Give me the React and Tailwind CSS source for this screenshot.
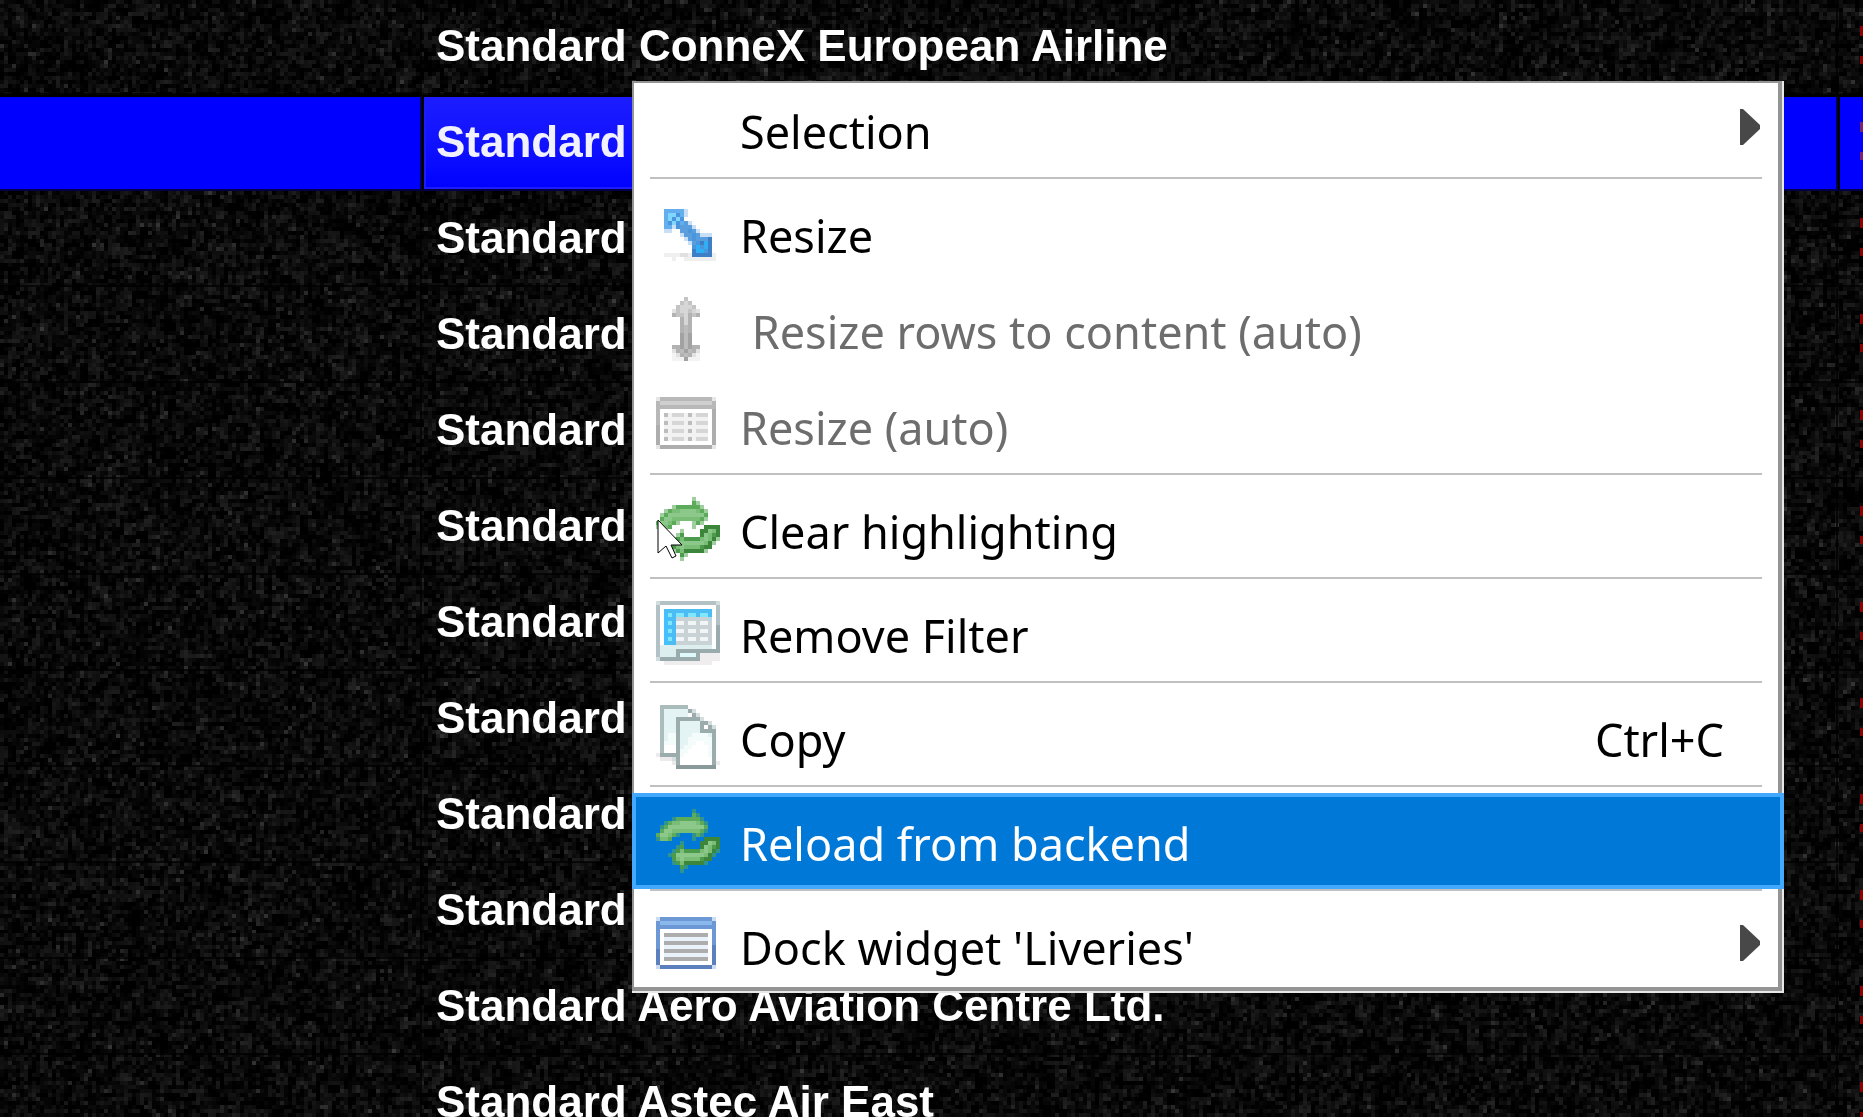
import { useEffect, useRef } from "react";

const airlines = [
  "Standard ConneX European Airline",
  "Standard",
  "Standard",
  "Standard",
  "Standard",
  "Standard",
  "Standard",
  "Standard",
  "Standard",
  "Standard",
  "Standard Aero Aviation Centre Ltd.",
  "Standard Astec Air East",
];
const SELECTED = 1;

/* Icons are 16 x 16 pixel maps; every character is a key of the palette. */
const resize = {
  palette: { A: "#62aeee", B: "#7fd6ff", C: "#4a96dc", D: "#5a9edd", E: "#3d7ec6", F: "#2fb0f4", l: "#c9dff5", s: "#efeff0", t: "#dfe0e2" },
  rows: [
    "", "",
    "..AAAAAl",
    "..ABBCAl",
    "..ABCBC.",
    "..ACBCADl",
    "..AAlCDDDl",
    "..ll..DDCDl",
    "......lDDCDlll",
    ".......lDCDDDE",
    "........lDCEFE",
    ".........CFCFE",
    ".........EFFCE",
    "..ssssttsEEEEEs",
    "....s..ssssssss",
    "",
  ],
};
const rowsAuto = {
  palette: { A: "#c4c4c4", B: "#d6d6d6", C: "#b2b2b2", D: "#a2a2a2", E: "#bcbcbc", l: "#e2e2e2", s: "#f3f3f3" },
  rows: [
    ".......A",
    "......ABA",
    ".....ABBBA",
    "....lABBABl",
    "....CAABCAC",
    "......CBC",
    "......CBC",
    "......CEC",
    "......CEC",
    "......DED",
    "......DED",
    "......DED",
    "....CCDEDCC",
    "....lCEDECl",
    "....slCECls",
    "....sssDsss",
  ],
};
const tableGray = {
  palette: { A: "#b8b8b8", B: "#cfcfcf", C: "#adadad", w: "#ffffff", d: "#bdbdbd", e: "#d6d6d6", f: "#f2f2f2", l: "#e6e6e6" },
  rows: [
    "",
    "lAAAAAAAAAAAAAl",
    "ABBBBBBBBBBBBBA",
    "AAAAAAAAAAAAAAA",
    "AwwwwwwwwwwwwwC",
    "AwdfeeefdfeeewC",
    "AwfffffffffffwC",
    "AwdfeeefdfeeewC",
    "CwfffffffffffwC",
    "CwdfeeefdfeeewC",
    "CwfffffffffffwC",
    "CwdfeeefdfeeewC",
    "CwwwwwwwwwwwwwC",
    "lCCCCCCCCCCCCCl",
    "", "",
  ],
};
const refresh = {
  palette: { A: "#5cab5b", B: "#8cc88a", C: "#79bd77", D: "#3b863b", E: "#4c9a4b", l: "#55a85590" },
  rows: [
    ".........l",
    ".........Al",
    "....lAAAAAAl",
    "..lACCBBBBCAl",
    ".lABBBBBBBBBA",
    ".ABBCCCCCCCAl",
    "ABBCAl...lAl",
    "lCCA.....l..DDDD",
    "......l....DDBCD",
    ".....lE....DBCED",
    "....lECEEEECBCDl",
    "...lEBBBBBBBCDl",
    "....ECBCCCCEDD",
    "....lECDDDDDl",
    "......El",
    "......l",
  ],
};
const filter = {
  palette: { A: "#b1c1c5", B: "#9aabae", w: "#ffffff", c: "#4cbcf4", b: "#42c0ff", d: "#7fe6fb", g: "#c9d3d5", h: "#f2f5f5", e: "#dceeed", f: "#b7d6df", i: "#dffafa", l: "#d2dde0", s: "#f0edef" },
  rows: [
    "lAAAAAAAAAAAAAAl",
    "AwwwwwwwwwwwwwwA",
    "AwccccccccccccwA",
    "AwbdcddcddcddcwA",
    "AwbccggggggggfwA",
    "AwbdchhghhghhgwA",
    "AwbccgggggggggwB",
    "AwbdchhghhghhgwB",
    "AwbccgggggggggwB",
    "AwbdchhghhghhgwB",
    "AwbccgggggggggwB",
    "AeeeeeeeeeeeeewB",
    "AeeeeBBBBBBBBBBB",
    "AeeeeBiiiiBsssss",
    "lBBBBBBBBBBsssss",
    "..ssssssssssss",
  ],
};
const copy = {
  palette: { A: "#abbcbc", B: "#9aacac", C: "#8a9999", w: "#ffffff", c: "#e4f4f4", d: "#f3fbfb", l: "#d5dede", s: "#eceaec" },
  rows: [
    ".AAAAAAA",
    ".AccccccBl",
    ".AccccccwBl",
    ".AcccBBBBBBl",
    ".AcccBcccccBBl",
    ".AcccBcccccBwBl",
    ".AcccBcccccBBBB",
    ".AcddBcccddddcB",
    ".AcddBccddddddB",
    ".AdddBccddwwddB",
    ".AwwwBcddwwwwdB",
    ".AwwwBddwwwwwdB",
    "sBBBBBdwwwwwwdB",
    ".ssslBwwwwwwwwB",
    "....sBwwwwwwwwBs",
    ".....CCCCCCCCCC",
  ],
};
const listBlue = {
  palette: { A: "#6c98d6", B: "#8bb8ec", C: "#5c7fbe", w: "#ffffff", d: "#adadad", f: "#eaf2fb", l: "#cddcf1" },
  rows: [
    "",
    "lAAAAAAAAAAAAAl",
    "ABBBBBBBBBBBBBA",
    "AAAAAAAAAAAAAAA",
    "AwwwwwwwwwwwwwA",
    "AwdddddddddddwA",
    "AwfffffffffffwA",
    "AwdddddddddddwA",
    "AwfffffffffffwC",
    "CwdddddddddddwC",
    "CwfffffffffffwC",
    "CwdddddddddddwC",
    "CwwwwwwwwwwwwwC",
    "lCCCCCCCCCCCCCl",
    "", "",
  ],
};

function PixelIcon({ icon }) {
  return (
    <svg viewBox="0 0 16 16" className="size-16 shrink-0" shapeRendering="crispEdges" aria-hidden="true">
      {icon &&
        icon.rows.flatMap((row, y) =>
          [...row].map((key, x) =>
            icon.palette[key] ? <rect key={`${x}-${y}`} x={x} y={y} width="1" height="1" fill={icon.palette[key]} /> : null
          )
        )}
    </svg>
  );
}

/* Dark speckled backdrop, drawn once with a seeded generator. */
function Grain() {
  const ref = useRef(null);
  useEffect(() => {
    const canvas = ref.current;
    const ctx = canvas.getContext("2d");
    const { width, height } = canvas;
    const image = ctx.createImageData(width, height);
    let seed = 20011;
    const random = () => {
      seed = (seed * 1664525 + 1013904223) >>> 0;
      return seed / 4294967296;
    };
    const base = Array.from({ length: width * height }, random);
    for (let i = 0; i < base.length; i++) {
      const near = ((base[i - 1] ?? 0.5) + (base[i - width] ?? 0.5)) / 2;
      const mix = base[i] * 0.6 + near * 0.4;
      const v = Math.min(62, Math.floor(mix * mix * 44 + (random() > 0.95 ? 20 : 0) - 3));
      image.data.set([v, v, v, 255], i * 4);
    }
    ctx.putImageData(image, 0, 0);
  }, []);
  return <canvas ref={ref} width="466" height="280" className="absolute inset-0 h-full w-full [image-rendering:pixelated]" aria-hidden="true" />;
}

function Row({ name, selected }) {
  const edge = selected ? "border-t-black border-l-black bg-[#0000ff]" : "border-t-transparent border-l-transparent";
  const mark = selected ? "bg-[#7c2472]" : "bg-[#8c0000]";
  return (
    <tr className="h-24" aria-selected={selected}>
      <td className={`border-2 border-l-0 border-r-black/70 border-b-black/70 p-0 ${edge}`} />
      <td className={`border-2 border-r-black/70 border-b-black/70 p-0 ${edge}`}>
        <div
          className={`flex h-[92px] items-center pb-0.5 pl-3 whitespace-nowrap ${
            selected ? "bg-linear-to-b from-[#1c1cff] to-[#0000ff] text-[#f0f0ff] shadow-[inset_0_0_0_2px_#1c1cff]" : "text-white"
          }`}
        >
          {name}
        </div>
      </td>
      <td className={`border-2 border-r-black/70 border-b-black/70 p-0 ${edge}`} />
      <td className={`border-2 border-r-0 border-b-black/70 p-0 ${edge}`}>
        <div className="flex flex-col items-end gap-5 pb-1">
          <span className={`h-2.5 w-[3px] ${mark}`} />
          <span className={`h-2 w-[3px] ${mark}`} />
        </div>
      </td>
    </tr>
  );
}

function Item({ icon, label, shortcut, submenu, disabled, active }) {
  const tone = active
    ? "bg-[#0078d7] text-white shadow-[inset_0_0_0_4px_#42a9ff]"
    : disabled
      ? "text-[#6d6d6d]"
      : "text-black";
  return (
    <button type="button" role="menuitem" disabled={disabled} className={`flex h-24 w-full items-center pr-6 pl-6 text-left ${tone}`}>
      <PixelIcon icon={icon} />
      <span className="ml-5 flex-1 pt-1 whitespace-pre">{label}</span>
      {shortcut && <span className="pt-1 pr-9">{shortcut}</span>}
      {submenu && (
        <svg viewBox="0 0 20 36" className="mb-1 h-9 w-5" aria-hidden="true">
          <path d="M0 0H3L20 16V20L3 36H0Z" fill="#484848" />
        </svg>
      )}
    </button>
  );
}

function Separator() {
  return (
    <div role="separator" className="h-2 pr-[22px] pl-[18px]">
      <div className="h-0.5 bg-[#c0c0c0]" />
    </div>
  );
}

export default function App() {
  return (
    <main className="relative h-screen w-full overflow-hidden bg-black">
      <Grain />
      <table className="relative -mt-px w-full table-fixed border-separate border-spacing-0 font-['Liberation_Sans',sans-serif] text-[44px] leading-none font-bold">
        <colgroup>
          <col className="w-[422px]" />
          <col />
          <col className="w-[93px]" />
          <col className="w-[25px]" />
        </colgroup>
        <tbody>
          {airlines.map((name, i) => (
            <Row key={i} name={name} selected={i === SELECTED} />
          ))}
        </tbody>
      </table>

      <div
        role="menu"
        className="absolute top-[81px] left-[632px] w-[1152px] bg-white font-['Noto_Sans',sans-serif] text-[45px] leading-none shadow-[inset_-2px_-2px_0_0_#e8e8e8,inset_2px_2px_0_0_#949494,inset_-6px_-6px_0_0_#949494]"
      >
        <Item label="Selection" submenu />
        <Separator />
        <Item icon={resize} label="Resize" />
        <Item icon={rowsAuto} label=" Resize rows to content (auto)" disabled />
        <Item icon={tableGray} label="Resize (auto)" disabled />
        <Separator />
        <Item icon={refresh} label="Clear highlighting" />
        <Separator />
        <Item icon={filter} label="Remove Filter" />
        <Separator />
        <Item icon={copy} label="Copy" shortcut="Ctrl+C" />
        <Separator />
        <Item icon={refresh} label="Reload from backend" active />
        <Separator />
        <Item icon={listBlue} label="Dock widget 'Liveries'" submenu />
        <svg viewBox="0 0 28 42" className="absolute top-[438px] left-[25px] h-[42px] w-7" aria-hidden="true">
          <path d="M1 1V34L9 27L15 39L19 37L14 26H25Z" fill="#fff" stroke="#000" />
        </svg>
      </div>
    </main>
  );
}
